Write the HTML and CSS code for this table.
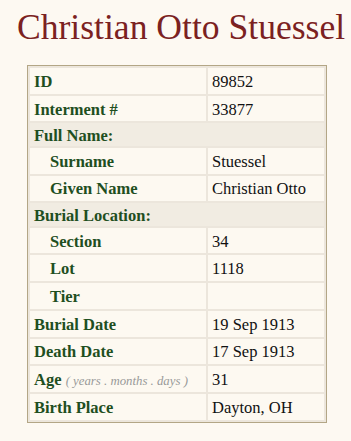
FILE: index.html
```html
<!DOCTYPE html>
<html>
<head>
<meta charset="utf-8">
<link rel="stylesheet" href="styles.css">
</head>
<body>
<h1 class="title">Christian Otto Stuessel</h1>
<table class="record">
  <tr><th class="label">ID</th><td class="value">89852</td></tr>
  <tr><th class="label">Interment #</th><td class="value">33877</td></tr>
  <tr class="group"><th class="label" colspan="2">Full Name:</th></tr>
  <tr><th class="label sub">Surname</th><td class="value">Stuessel</td></tr>
  <tr><th class="label sub">Given Name</th><td class="value">Christian Otto</td></tr>
  <tr class="group"><th class="label" colspan="2">Burial Location:</th></tr>
  <tr><th class="label sub">Section</th><td class="value">34</td></tr>
  <tr><th class="label sub">Lot</th><td class="value">1118</td></tr>
  <tr><th class="label sub">Tier</th><td class="value"></td></tr>
  <tr><th class="label">Burial Date</th><td class="value">19 Sep 1913</td></tr>
  <tr><th class="label">Death Date</th><td class="value">17 Sep 1913</td></tr>
  <tr><th class="label">Age <span class="hint">( years . months . days )</span></th><td class="value">31</td></tr>
  <tr><th class="label">Birth Place</th><td class="value">Dayton, OH</td></tr>
</table>
</body>
</html>
```
FILE: styles.css
```css
html, body {
  margin: 0;
  padding: 0;
  background: #fdf9f2;
}
body {
  font-family: "Liberation Serif", "DejaVu Serif", serif;
}
.title {
  margin: 0;
  padding: 6px 0 0 17px;
  height: 58px;
  box-sizing: border-box;
  font-weight: normal;
  font-size: 35.6px;
  line-height: 42px;
  color: #7b2121;
  white-space: nowrap;
}
.record {
  margin: 7px 0 0 27px;
  width: 300px;
  border: 1px solid #b3a686;
  border-spacing: 2px;
  background: #ece6dc;
}
.record th, .record td {
  background: #fdf9f1;
  height: 23.7px;
  padding: 2px 0 0 4px;
  text-align: left;
  vertical-align: middle;
  font-size: 16.5px;
  line-height: 18px;
}
.record .label {
  width: 172px;
  color: #1f4f1f;
  font-weight: bold;
}
.record .label.sub {
  padding-left: 20px;
  width: 156px;
}
.record .value {
  color: #111;
  font-weight: normal;
}
.record .group th {
  background: #f1ece2;
  height: 20.5px;
}
.hint {
  font-weight: normal;
  font-style: italic;
  font-size: 12.8px;
  color: #999;
}
```
